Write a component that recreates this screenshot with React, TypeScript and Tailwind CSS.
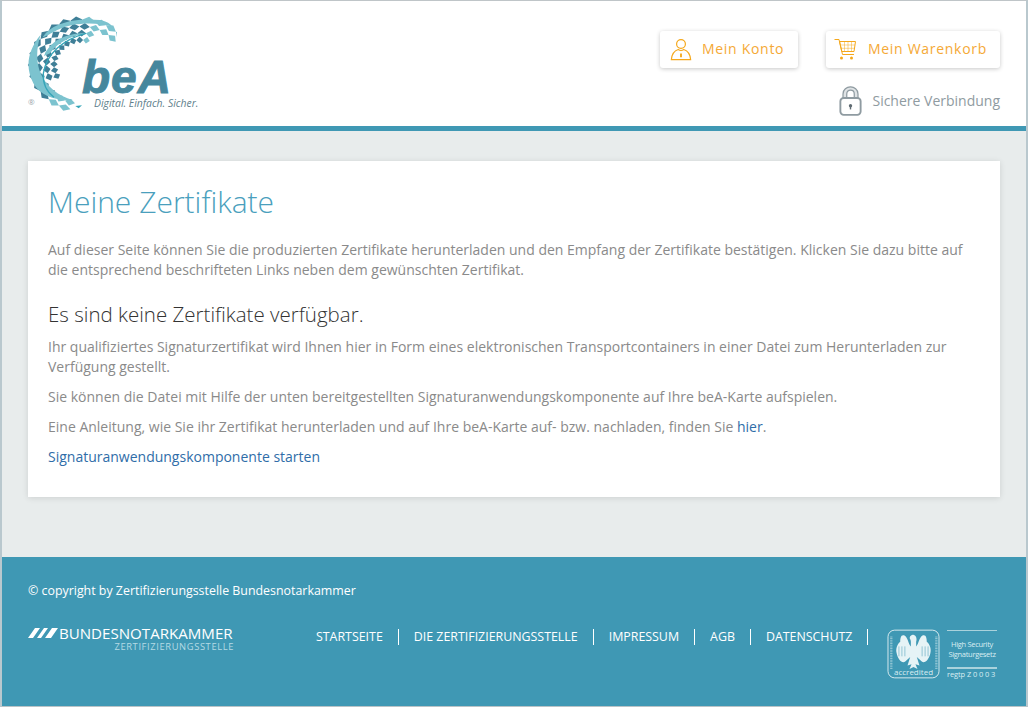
import React from "react";

// Chequered globe of the beA logo: diamonds laid out on an elliptical lattice
function latticeDiamonds() {
  const out: { d: string; fill: string }[] = [];
  const cx = 245;
  const cy = 195;
  const rings = [0.94, 0.8, 0.66, 0.52];
  const hr = 0.07;
  const ha = 7;
  for (let r = 0; r < rings.length; r++) {
    for (let a = 0; a < 17; a++) {
      const deg = -40 - a * 14 - r * 4;
      if (deg < -262) continue;
      // the band gets narrower towards the lower end of the globe
      if (deg < -215 && r > 1) continue;
      if (deg > -70 && r > 1) continue;
      const pt = (t: number, g: number) => {
        const rad = (g * Math.PI) / 180;
        return `${(cx + 160 * t * Math.cos(rad)).toFixed(1)} ${(cy + 145 * t * Math.sin(rad)).toFixed(1)}`;
      };
      const t = rings[r];
      const d = `M${pt(t + hr, deg)}L${pt(t, deg + ha)}L${pt(t - hr, deg)}L${pt(t, deg - ha)}Z`;
      const fill = deg > -85 ? "#7cc3cf" : deg < -235 ? "#7cc3cf" : "#3f7f97";
      out.push({ d, fill });
    }
  }
  return out;
}

function BeaSwoosh() {
  return (
    <svg viewBox="81 45 270 300" className="absolute left-[-1px] top-[-2px] h-[100px] w-[90px]">
      {latticeDiamonds().map((p, i) => (
        <path key={i} d={p.d} fill={p.fill} />
      ))}
      <path d="M122 104C84 150 74 200 100 250C120 288 170 304 218 300C176 288 136 260 118 210C108 176 110 140 122 104Z" fill="#7cc3cf" />
      <path d="M128 112C150 76 210 52 300 60C320 64 332 72 338 80C290 66 220 66 172 90C152 100 138 110 128 112Z" fill="#7cc3cf" />
      <path d="M132 168C150 122 200 98 262 100C220 106 176 124 150 160Z" fill="#7cc3cf" />
      <path d="M258 100C190 118 140 160 130 220C128 250 140 275 162 292" fill="none" stroke="#35a5b8" strokeWidth="4" />
      <path d="M226 318L246 316L236 325Z" fill="#35a5b8" />
    </svg>
  );
}

function PersonIcon() {
  return (
    <svg viewBox="0 0 24 24" className="h-[24px] w-[22px]" fill="none" stroke="#f5a81c" strokeWidth="1.300">
      <circle cx="12" cy="6.500" r="4.800" />
      <path d="M1.500 23.500C2 16.500 6 13.500 9 12.500C11 14 13 14 15 12.500C18 13.500 22 16.500 22.500 23.500Z" />
      <path d="M12 17V21" strokeWidth="2" />
    </svg>
  );
}

function CartIcon() {
  return (
    <svg viewBox="0 0 22 22" className="h-[22px] w-[22px]" fill="none" stroke="#f5a81c" strokeWidth="1">
      <path d="M0.500 1.500H5L8.500 16.500H20" />
      <path d="M5.500 3.500H21.500L20 13.500H7.800Z" />
      <path d="M6.200 7H21M7 10.300H20.500M10.500 3.500V13.500M14 3.500V13.500M17.500 3.500V13.500" strokeWidth="0.600" strokeOpacity="0.800" />
      <circle cx="7.500" cy="20" r="1.500" fill="#f5a81c" stroke="none" />
      <circle cx="17.500" cy="20" r="1.500" fill="#f5a81c" stroke="none" />
    </svg>
  );
}

function LockIcon() {
  return (
    <svg viewBox="0 0 24 32" className="h-[30px] w-[23px]" fill="none" stroke="#8f9ba1" strokeWidth="2">
      <path d="M6 13V8.500C6 0.500 18 0.500 18 8.500V13" stroke="#dfe3e5" strokeWidth="4" />
      <path d="M4 13V8.500C4 -1.500 20 -1.500 20 8.500V13" strokeWidth="1.300" />
      <path d="M8 13V8.500C8 3 16 3 16 8.500V13" strokeWidth="1.300" />
      <rect x="1.200" y="12.800" width="21.600" height="18" rx="3.500" />
      <circle cx="12" cy="21" r="1.800" fill="#5f6b72" stroke="none" />
      <path d="M12 21V25" stroke="#5f6b72" strokeWidth="1.500" />
    </svg>
  );
}

// Federal eagle seal, drawn in the zoomed crop's coordinates
function Eagle() {
  const feathers = [114, 123, 132, 184, 193, 202];
  return (
    <svg viewBox="78 40 160 150" className="absolute left-0 top-0 h-[50px] w-[53px]" fill="#e6f3f6">
      <rect x="81" y="43" width="154" height="144" rx="20" fill="none" stroke="#d5e9ee" strokeWidth="3" />
      <path d="M91 62V160M227 62V160" stroke="#8fc4d2" strokeWidth="7" strokeDasharray="3 2" fill="none" />
      <path d="M150 92C142 84 142 68 132 60C120 54 118 68 118 78C108 86 104 100 107 112C110 130 124 146 133 138L148 124L140 150L152 146L146 160L158 154L170 160L164 146L176 150L168 124L183 138C192 146 206 130 209 112C212 100 208 86 198 78C198 68 196 54 184 60C174 68 174 84 166 92L166 78C170 68 164 56 156 57C148 58 144 66 149 72L150 78Z" />
      {feathers.map((x) => (
        <path key={x} d={`M${x} 92V122`} stroke="#3f98b4" strokeWidth="1.500" fill="none" />
      ))}
    </svg>
  );
}

const navItems = ["STARTSEITE", "DIE ZERTIFIZIERUNGSSTELLE", "IMPRESSUM", "AGB", "DATENSCHUTZ"];

export default function App() {
  return (
    <div className="flex h-[707px] w-[1028px] flex-col overflow-hidden border-b border-l-2 border-r-2 border-t border-b-[#b9c3c7] border-l-[#b9c8ce] border-r-[#b9c8ce] border-t-[#bfc5c8] bg-[#e8ecec] font-['Open_Sans',sans-serif] text-[14px] leading-[20px] text-[#8a8a8a]">
      {/* Header */}
      <header className="flex h-[130px] shrink-0 items-start justify-between border-b-[5px] border-[#3f98b4] bg-white pl-[26px] pr-[26px]">
        <div className="relative mt-[16px] h-[98px] w-[172px]">
          <BeaSwoosh />
          <span className="absolute left-[54px] top-[42px] font-['Liberation_Sans',sans-serif] text-[46px] font-bold italic leading-[36px] tracking-[1px] text-[#45879d] [-webkit-text-stroke:1px_#45879d]">
            beA
          </span>
          <span className="absolute left-[66px] top-[79px] whitespace-nowrap text-[10.400px] italic leading-[14px] text-[#5f7f8c]">
            Digital. Einfach. Sicher.
          </span>
          <span className="absolute left-0 top-[79px] text-[8px] leading-[12px] text-[#9aa5aa]">®</span>
        </div>
        <div className="flex flex-col items-end">
          <div className="mt-[30px] flex gap-[28px]">
            <a className="flex h-[37px] w-[138px] items-center gap-[10px] rounded-[3px] bg-white pb-[1px] pl-[10px] tracking-[0.7px] text-[#f5a936] shadow-[0_1px_4px_rgba(0,0,0,0.22)]">
              <PersonIcon />
              Mein Konto
            </a>
            <a className="flex h-[37px] w-[174px] items-center gap-[12px] rounded-[3px] bg-white pb-[1px] pl-[8px] tracking-[0.7px] text-[#f5a936] shadow-[0_1px_4px_rgba(0,0,0,0.22)]">
              <CartIcon />
              Mein Warenkorb
            </a>
          </div>
          <div className="mt-[18px] flex items-center gap-[10px] text-[#8f9ba1]">
            <LockIcon />
            Sichere Verbindung
          </div>
        </div>
      </header>

      {/* Content */}
      <main className="flex-1 px-[26px] pt-[30px]">
        <section className="h-[336px] bg-white px-[20px] pt-[20px] shadow-[0_1px_6px_rgba(0,0,0,0.12)]">
          <h1 className="text-[30px] font-light leading-[42px] text-[#4a9fbd]">Meine Zertifikate</h1>
          <p className="mt-[17px]">
            Auf dieser Seite können Sie die produzierten Zertifikate herunterladen und den Empfang der Zertifikate bestätigen. Klicken Sie dazu bitte auf die entsprechend beschrifteten Links neben dem gewünschten Zertifikat.
          </p>
          <h2 className="mt-[19px] text-[20.500px] font-light leading-[30px] text-[#333]">Es sind keine Zertifikate verfügbar.</h2>
          <p className="mt-[8px]">
            Ihr qualifiziertes Signaturzertifikat wird Ihnen hier in Form eines elektronischen Transportcontainers in einer Datei zum Herunterladen zur Verfügung gestellt.
          </p>
          <p className="mt-[10px]">
            Sie können die Datei mit Hilfe der unten bereitgestellten Signaturanwendungskomponente auf Ihre beA-Karte aufspielen.
          </p>
          <p className="mt-[10px]">
            Eine Anleitung, wie Sie ihr Zertifikat herunterladen und auf Ihre beA-Karte auf- bzw. nachladen, finden Sie <a className="text-[#2f6da8]">hier</a>.
          </p>
          <p className="mt-[10px]">
            <a className="text-[#2f6da8]">Signaturanwendungskomponente starten</a>
          </p>
        </section>
      </main>

      {/* Footer */}
      <footer className="h-[149px] shrink-0 bg-[#3f98b4] pl-[26px] pr-[29px] pt-[24px] text-white">
        <p className="text-[12.400px] leading-[20px]">© copyright by Zertifizierungsstelle Bundesnotarkammer</p>
        <div className="mt-[26px] flex items-start justify-between">
          <div className="mt-[-1px] w-[206px] shrink-0">
            <div className="flex items-center gap-[1px]">
              <svg viewBox="0 0 30 10" className="h-[10px] w-[30px]" fill="#fff">
                <path d="M0 10L7 0H12L5 10ZM9 10L16 0H20L13 10ZM17 10L24 0H30L23 10Z" />
              </svg>
              <span className="text-[15.100px] leading-[14px]">BUNDESNOTARKAMMER</span>
            </div>
            <div className="mt-[2px] text-right text-[9.400px] leading-[10px] tracking-[0.6px] text-[#b5dbe5]">ZERTIFIZIERUNGSSTELLE</div>
          </div>
          <nav className="ml-[82px] mt-[2px] flex flex-1 text-[12.400px] leading-[16px]">
            {navItems.map((item, i) => (
              <a key={item} className={`border-r border-white pr-[15px] ${i === 0 ? "" : "pl-[15px]"}`}>
                {item}
              </a>
            ))}
          </nav>
          <div className="relative mt-[2px] h-[50px] w-[110px] shrink-0 text-[#d9edf2]">
            <Eagle />
            <span className="absolute left-[7px] top-[38px] text-[8px] leading-[10px]">accredited</span>
            <div className="absolute right-0 top-[1px] flex h-[39px] w-[50px] flex-col items-center border-b-2 border-t border-[#a9d2dc] pt-[8px] text-center text-[7.500px] leading-[10px] tracking-[-0.3px]">
              <span className="whitespace-nowrap">High Security</span>
              <span className="whitespace-nowrap">Signaturgesetz</span>
            </div>
            <span className="absolute right-0 top-[40px] w-[50px] whitespace-nowrap text-[7.500px] leading-[10px] tracking-[-0.1px]">regtp Z 0 0 0 3</span>
          </div>
        </div>
      </footer>
    </div>
  );
}
